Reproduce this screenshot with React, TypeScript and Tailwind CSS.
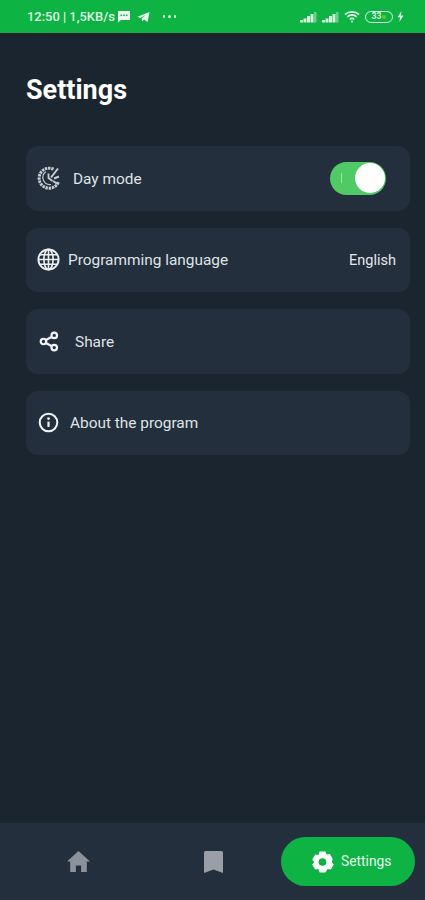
import type { ReactNode } from 'react';

function Signal() {
  return (
    <svg width="17" height="12" viewBox="0 0 17 12" fill="#d8f3df">
      <rect x="0" y="9" width="3" height="2.500" />
      <rect x="3.500" y="7.500" width="3" height="4" />
      <rect x="7" y="5" width="3" height="6.500" />
      <rect x="10.500" y="3" width="3" height="8.500" />
      <rect x="14" y="1" width="2.500" height="10.500" opacity="0.45" />
    </svg>
  );
}

function StatusBar() {
  return (
    <div className="h-[35px] shrink-0 bg-[#0db343] border-b-2 border-[#17212b] flex items-center pl-[27px] pr-[21px] text-[#dff5e5] text-[12.900px] font-medium">
      <span className="whitespace-nowrap">12:50 | 1,5KB/s</span>
      <svg className="ml-[2px]" width="14" height="13" viewBox="0 0 14 13" fill="#eefaf1">
        <path d="M1 1h12v9H4l-3 2.500z" />
        <rect x="3.500" y="4.500" width="1.600" height="1.600" fill="#0db343" />
        <rect x="6.200" y="4.500" width="1.600" height="1.600" fill="#0db343" />
        <rect x="8.900" y="4.500" width="1.600" height="1.600" fill="#0db343" />
      </svg>
      <svg className="ml-[6px]" width="13" height="12" viewBox="0 0 13 12" fill="#eefaf1">
        <path d="M0.500 5.800 12.500 1 10.600 11 7 8.600 5.200 10.600 4.600 7.600 9.600 3.400 3.400 7z" />
      </svg>
      <span className="ml-[13px] flex gap-[3px]">
        <span className="size-[2.500px] rounded-full bg-[#d8f3df]" />
        <span className="size-[2.500px] rounded-full bg-[#d8f3df]" />
        <span className="size-[2.500px] rounded-full bg-[#d8f3df]" />
      </span>
      <div className="ml-auto flex items-center">
        <Signal />
        <span className="w-[5px]" />
        <Signal />
        <svg className="ml-[5px]" width="16" height="13" viewBox="0 0 16 13" fill="none" stroke="#e4f7e9" strokeWidth="1.800">
          <path d="M1 4.500c4-3.600 10-3.600 14 0" />
          <path d="M3.400 6.900c2.800-2.400 6.400-2.400 9.200 0" />
          <path d="M5.800 9.200c1.400-1.100 3-1.100 4.400 0" />
          <circle cx="8" cy="11.400" r="1" fill="#e4f7e9" stroke="none" />
        </svg>
        <div className="ml-[5px] w-[28px] h-[12px] rounded-full border border-[#d8f3df] flex items-center justify-center gap-px">
          <span className="text-[8.500px] leading-none font-bold">33</span>
          <span className="size-[4px] rounded-full bg-[#62c91e]" />
        </div>
        <svg className="ml-[4px]" width="7" height="11" viewBox="0 0 7 11" fill="#e4f7e9">
          <path d="M4.400 0 0.600 6.200H3L2.400 11 6.400 4.400H3.900z" />
        </svg>
      </div>
    </div>
  );
}

function DayIcon() {
  return (
    <svg width="24" height="24" viewBox="0 0 24 24" fill="none" stroke="#c6ccd2" strokeWidth="1.600">
      <path d="M16.500 3.200A10 10 0 1 0 21.400 16" strokeDasharray="2.400 0.800" strokeWidth="3" />
      <path d="M9 5.800A7 7 0 0 0 14 18.500" strokeWidth="1.200" />
      <path d="M11.500 7.500v4.500l4 3" strokeWidth="1.800" />
      <path d="M14 11.500 21 2.500M17 12.500l5-2M16 15l4.500 3" strokeWidth="2" />
    </svg>
  );
}

function GlobeIcon() {
  return (
    <svg width="23" height="23" viewBox="0 0 24 24" fill="none" stroke="#eceef0" strokeWidth="1.700">
      <circle cx="12" cy="12" r="10.500" strokeWidth="2" />
      <ellipse cx="12" cy="12" rx="4.800" ry="10.500" />
      <path d="M12 1.500v21M1.500 12h21M3 7h18M3 17h18" />
    </svg>
  );
}

function ShareIcon() {
  return (
    <svg width="20" height="21" viewBox="0 0 20 22" fill="none" stroke="#f1f3f4" strokeWidth="2.300">
      <circle cx="4.200" cy="11" r="2.900" />
      <circle cx="15.500" cy="4.600" r="2.900" />
      <circle cx="15.500" cy="17.400" r="2.900" />
      <path d="M6.800 9.500 13 6M6.800 12.500 13 16" />
    </svg>
  );
}

function InfoIcon() {
  return (
    <svg width="21" height="21" viewBox="0 0 22 22" fill="none" stroke="#f1f3f4" strokeWidth="2.100">
      <circle cx="11" cy="11" r="9.200" />
      <path d="M11 10v5.600" strokeWidth="2.300" />
      <circle cx="11" cy="6.900" r="1.400" fill="#f1f3f4" stroke="none" />
    </svg>
  );
}

function Row({ icon, label, gap, right }: { icon: ReactNode; label: string; gap: string; right?: ReactNode }) {
  return (
    <div className="h-[64.500px] rounded-[12px] bg-[#242f3d] flex items-center pl-[10px] pr-[14px]">
      <span className="w-[25px] flex justify-center shrink-0">{icon}</span>
      <span className={`${gap} pt-[2px] text-[15.400px] text-[#dfe3e6]`}>{label}</span>
      {right && <div className="ml-auto">{right}</div>}
    </div>
  );
}

export default function App() {
  return (
    <div className="w-[425px] h-[900px] flex flex-col bg-[#1b2530] overflow-hidden font-['Roboto',sans-serif]">
      <StatusBar />

      <main className="flex-1 px-[26px]">
        <h1 className="mt-[36px] h-[38px] text-[27px] leading-[38px] font-bold text-white">Settings</h1>
        <div className="mt-[37px] flex flex-col gap-[17px] w-[384px]">
          <Row
            icon={<DayIcon />}
            label="Day mode"
            gap="ml-[12px]"
            right={
              <div className="w-[56px] h-[33px] mr-[10px] rounded-full bg-[#4fca64] flex items-center justify-between pl-[11px] pr-[1px]">
                <span className="w-px h-[10px] bg-[#9be5a8]" />
                <span className="size-[30px] rounded-full bg-white" />
              </div>
            }
          />
          <Row
            icon={<GlobeIcon />}
            label="Programming language"
            gap="ml-[7px]"
            right={<span className="text-[14.500px] pt-[2px] block text-[#e4e7ea]">English</span>}
          />
          <Row icon={<ShareIcon />} label="Share" gap="ml-[14px]" />
          <Row icon={<InfoIcon />} label="About the program" gap="ml-[9px]" />
        </div>
      </main>

      <nav className="h-[77px] shrink-0 bg-[#242f3e] flex items-center pl-[67px] pr-[10px]">
        <svg width="23" height="21" viewBox="0 0 23 21" fill="#8b929b">
          <path d="M11.500 0 0 10.600h3.200V21h5.700v-6.600h5.200V21h5.700V10.600H23z" />
        </svg>
        <svg className="ml-[114px]" width="19" height="22" viewBox="0 0 19 22" fill="#9a9fa7">
          <path d="M1.500 0h16A1.500 1.500 0 0 1 19 1.500V22l-9.500-3.600L0 22V1.500A1.500 1.500 0 0 1 1.500 0z" />
        </svg>
        <div className="ml-auto w-[134px] h-[49px] rounded-full bg-[#0db343] flex items-center pl-[30px] text-white">
          <svg width="23" height="24" viewBox="0 0 24 24" fill="#fff" fillRule="evenodd">
            <path d="M9 1h6l1.300 3.200 3.400-.5 3 5.100L21.600 12l2.100 2.700-3 5.100-3.400-.5L15 23H9l-1.300-3.700-3.400.5-3-5.100L3.400 12 1.300 9.300l3-5.100 3.400.5zM12 8a4 4 0 1 0 0 8 4 4 0 0 0 0-8z" />
          </svg>
          <span className="ml-[7px] text-[13.800px] text-[#e6f8eb]">Settings</span>
        </div>
      </nav>
    </div>
  );
}
